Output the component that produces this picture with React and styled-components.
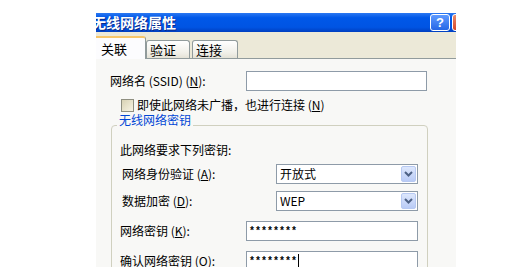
import React from 'react';
import styled, { createGlobalStyle } from 'styled-components';

const GlobalStyle = createGlobalStyle`
  html, body {
    margin: 0;
    background: #ffffff;
    overflow: hidden;
  }
  body {
    font-family: "Noto Sans CJK SC", "DejaVu Sans", sans-serif;
    font-size: 12px;
    color: #000;
  }
`;

const Page = styled.div`
  padding: 13px 0 0 96px;
  height: 267px;
  box-sizing: border-box;
`;

const Window = styled.div`
  width: 360px;
  height: 254px;
  overflow: hidden;
  display: flex;
  flex-direction: column;
`;

const TitleBar = styled.div`
  height: 19px;
  flex-shrink: 0;
  display: flex;
  align-items: center;
  background: linear-gradient(to bottom, #2b78f2 0%, #0058e8 25%, #0054e3 75%, #003fc0 100%);
`;

const Title = styled.div`
  flex: 1;
  min-width: 0;
  margin-left: -4px;
  color: #fff;
  font-weight: bold;
  font-size: 14px;
  line-height: 19px;
  white-space: nowrap;
  text-shadow: 1px 1px 0 #0a2a8a;
`;

const CaptionButton = styled.div`
  flex-shrink: 0;
  width: ${p => p.$w}px;
  height: 17px;
  box-sizing: border-box;
  border: 1px solid #ffffff;
  border-radius: 3px;
  margin-right: ${p => p.$mr}px;
  display: flex;
  align-items: center;
  justify-content: center;
  color: #fff;
  font-weight: bold;
  font-size: 13px;
  font-family: "Liberation Sans", sans-serif;
  background: ${p => p.$red
    ? 'linear-gradient(to bottom, #e88a6a, #d6482a)'
    : 'linear-gradient(to bottom, #5f9bff, #2566e6)'};
`;

const TabStrip = styled.div`
  height: 26px;
  flex-shrink: 0;
  display: flex;
  align-items: flex-end;
  background: #ece9d8;
  border-bottom: 1px solid #919b9c;
`;

const Tab = styled.div`
  box-sizing: border-box;
  width: ${p => p.$w}px;
  margin-left: ${p => p.$ml || 0}px;
  height: ${p => (p.$active ? 23 : 18)}px;
  margin-bottom: ${p => (p.$active ? -1 : 0)}px;
  padding-left: ${p => p.$pl}px;
  border: 1px solid #919b9c;
  border-bottom: none;
  border-top: ${p => (p.$active ? '2px solid #f7c66a' : '1px solid #919b9c')};
  border-radius: 3px 3px 0 0;
  background: ${p => (p.$active ? '#fcfcfe' : 'linear-gradient(to bottom, #ffffff, #f0efe8 70%, #e4e2d6)')};
  display: flex;
  align-items: center;
  font-size: 13px;
  line-height: 14px;
`;

const Panel = styled.div`
  flex: 1;
  background: #f8f8f6;
  padding: 12px 0 0 14px;
`;

const Row = styled.div`
  display: flex;
  align-items: center;
  height: 20px;
  margin-top: ${p => p.$mt || 0}px;
  margin-left: ${p => p.$ml || 0}px;
`;

const Label = styled.div`
  width: ${p => p.$w}px;
  flex-shrink: 0;
  line-height: 14px;
  white-space: nowrap;
`;

const Key = styled.span`
  text-decoration: underline;
`;

const TextBox = styled.div`
  width: ${p => p.$w}px;
  height: 20px;
  box-sizing: border-box;
  border: 1px solid #8e9ba8;
  background: #fff;
  display: flex;
  align-items: center;
  padding-left: 2px;
  font-family: "Liberation Mono", monospace;
  font-size: 10px;
  font-weight: bold;
`;

const Caret = styled.span`
  width: 1px;
  height: 14px;
  background: #000;
  margin-left: 1px;
`;

const CheckRow = styled.div`
  display: flex;
  align-items: center;
  gap: 3px;
  height: 14px;
  margin: 7px 0 0 11px;
  line-height: 14px;
`;

const CheckBox = styled.div`
  width: 13px;
  height: 13px;
  box-sizing: border-box;
  border: 1px solid #8f8f80;
  background: linear-gradient(135deg, #d8d2b4, #f8f4e4);
`;

const GroupBox = styled.fieldset`
  margin: 1px 0 0 1px;
  width: 317px;
  box-sizing: border-box;
  border: 1px solid #d0d0bf;
  border-radius: 4px;
  padding: 6px 9px 20px 8px;
  min-width: 0;
`;

const Legend = styled.legend`
  color: #0046d5;
  padding: 0 2px 10px 2px;
  margin-left: -3px;
  line-height: 14px;
`;

const Text = styled.div`
  line-height: 14px;
`;

const Select = styled.div`
  width: 142px;
  height: 20px;
  box-sizing: border-box;
  border: 1px solid #8e9ba8;
  background: #fff;
  display: flex;
  align-items: center;
  justify-content: space-between;
  padding: 1px 1px 1px 3px;
  line-height: 14px;
`;

const DropButton = styled.div`
  width: 15px;
  height: 16px;
  box-sizing: border-box;
  border: 1px solid #b7c9f2;
  border-radius: 2px;
  background: linear-gradient(to bottom, #dde7fc, #b9cbf6);
  display: flex;
  align-items: center;
  justify-content: center;
`;

const Chevron = () => (
  <svg width="9" height="6" viewBox="0 0 9 6">
    <path d="M1 1 L4.5 4.5 L8 1" fill="none" stroke="#4d6185" strokeWidth="2" />
  </svg>
);

const Dropdown = ({ value }) => (
  <Select>
    <span>{value}</span>
    <DropButton><Chevron /></DropButton>
  </Select>
);

export default function App() {
  return (
    <>
      <GlobalStyle />
      <Page>
        <Window>
          <TitleBar>
            <Title>无线网络属性</Title>
            <CaptionButton $w={20} $mr={2}>?</CaptionButton>
            <CaptionButton $w={21} $mr={-17} $red />
          </TitleBar>
          <TabStrip>
            <Tab $active $w={54} $ml={-4} $pl={8}>关联</Tab>
            <Tab $w={44} $pl={3}>验证</Tab>
            <Tab $w={46} $ml={2} $pl={3}>连接</Tab>
          </TabStrip>
          <Panel>
            <Row>
              <Label $w={136}>网络名 (SSID) (<Key>N</Key>):</Label>
              <TextBox $w={181} />
            </Row>
            <CheckRow>
              <CheckBox />
              <span>即使此网络未广播，也进行连接 (<Key>N</Key>)</span>
            </CheckRow>
            <GroupBox>
              <Legend>无线网络密钥</Legend>
              <Text>此网络要求下列密钥:</Text>
              <Row $mt={7} $ml={2}>
                <Label $w={154}>网络身份验证 (<Key>A</Key>):</Label>
                <Dropdown value="开放式" />
              </Row>
              <Row $mt={7} $ml={2}>
                <Label $w={154}>数据加密 (<Key>D</Key>):</Label>
                <Dropdown value="WEP" />
              </Row>
              <Row $mt={10}>
                <Label $w={126}>网络密钥 (<Key>K</Key>):</Label>
                <TextBox $w={172}>********</TextBox>
              </Row>
              <Row $mt={10}>
                <Label $w={126}>确认网络密钥 (<Key>O</Key>):</Label>
                <TextBox $w={172}>********<Caret /></TextBox>
              </Row>
            </GroupBox>
          </Panel>
        </Window>
      </Page>
    </>
  );
}
